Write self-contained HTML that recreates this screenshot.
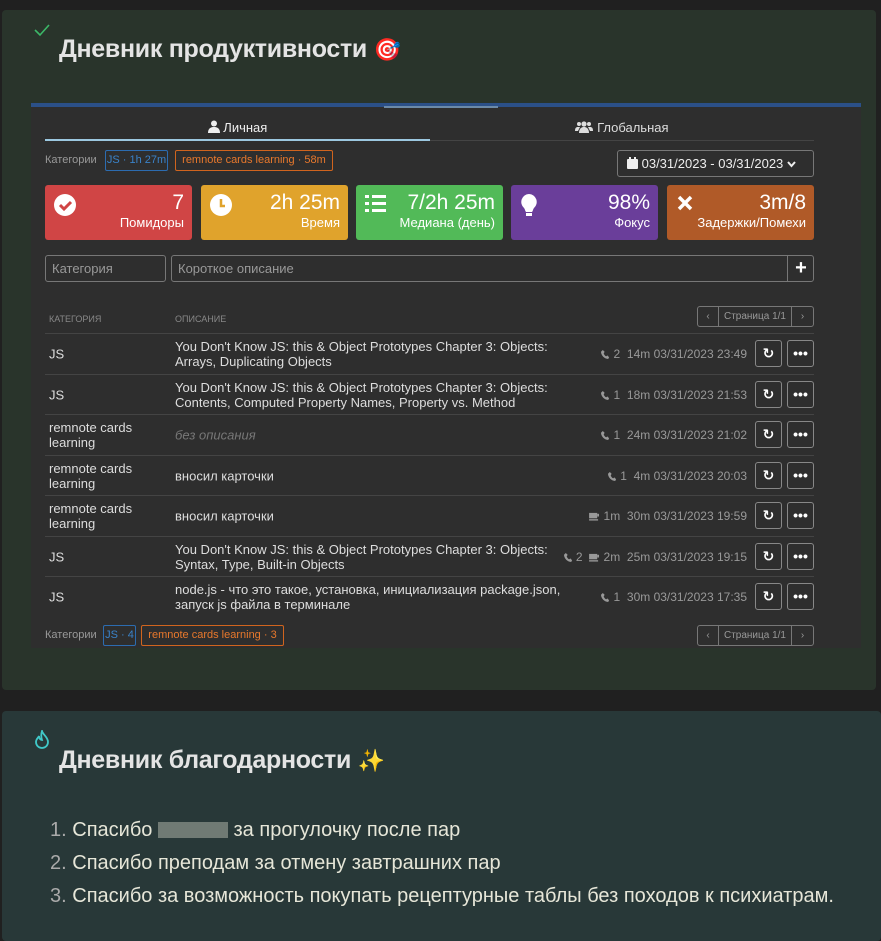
<!DOCTYPE html>
<html><head><meta charset="utf-8"><style>
*{box-sizing:border-box;margin:0;padding:0}
body{width:881px;height:929px;background:#202020;font-family:"Liberation Sans","DejaVu Sans",sans-serif;color:#ddd;position:relative;overflow:hidden}
.a{position:absolute}
.card1{left:2px;top:10px;width:874px;height:680px;background:#29342b;border-radius:4px}
.card2{left:2px;top:711px;width:879px;height:230px;background:#283838;border-radius:4px}
h1{position:absolute;font-size:25px;font-weight:bold;color:#e4e4e4;letter-spacing:-0.3px}
.w{left:31px;top:103px;width:830px;height:545px;background:#2e2e2e}
.tag{position:absolute;height:21px;border:1px solid;font-size:11px;line-height:19px;text-align:center;border-radius:2px;white-space:nowrap}
.stat{position:absolute;top:185px;height:55px;border-radius:3px;color:#fff;text-align:right;padding:6px 8px 0 0}
.stat b{display:block;font-weight:normal;font-size:21px;line-height:24px}
.stat span{font-size:13px;line-height:16px;display:block}
.stat svg{position:absolute;left:9px;top:9px}
.inp{position:absolute;top:255px;height:27px;border:1px solid #777;border-radius:3px;font-size:13px;color:#999;padding:5px 6px}
.row{position:absolute;left:45px;width:769px;height:40px;border-top:1px solid #444;font-size:13px;color:#ddd}
.row .c{position:absolute;left:4px;top:50%;transform:translateY(-50%);line-height:15px}
.row .d{position:absolute;left:130px;top:50%;transform:translateY(-50%);line-height:15px;width:392px}
.row .m{position:absolute;right:67px;top:50%;transform:translateY(-50%);font-size:12px;color:#999;white-space:nowrap}
.btn{position:absolute;top:6px;width:27px;height:27px;border:1px solid #888;border-radius:3px;color:#fff;text-align:center;font-weight:bold;line-height:25px;font-size:14px}
.pg{position:absolute;height:21px;border:1px solid #777;border-radius:3px;font-size:10px;color:#999;display:flex}
.pg div{border-right:1px solid #777;line-height:19px;text-align:center}
.pg div:last-child{border:0}
ol{position:absolute;left:50px;top:819px;font-size:20px;color:#e6e6d8;list-style:none}
ol li{height:33px;white-space:nowrap}
ol li span.n{color:#aaa}
.ph{display:inline-block;width:9px;height:9px;vertical-align:-1px}
</style></head><body>
<svg width="0" height="0" style="position:absolute"><defs><symbol id="p" viewBox="0 0 10 10"><path d="M2 0l2 2-1 2c1 2 2 3 3 3l1-1 2 2-1 2C4 10 0 6 0 2z" fill="#999"/></symbol><symbol id="k" viewBox="0 0 12 10"><rect x="0" y="1" width="9" height="6" fill="#999"/><rect x="9" y="2" width="2" height="3" fill="#999"/><rect x="0" y="8" width="10" height="1.5" fill="#999"/></symbol></defs></svg>
<div class="a card1"></div>
<svg class="a" style="left:33px;top:23px" width="18" height="14"><path d="M2 7l5 5L16 2" stroke="#3cb868" stroke-width="1.6" fill="none"/></svg>
<h1 style="left:59px;top:35px">Дневник продуктивности <span style="font-size:22px">🎯</span></h1>
<div class="a w"></div>
<div class="a" style="left:31px;top:103px;width:830px;height:4px;background:#2b5088"></div>
<div class="a" style="left:384px;top:106px;width:114px;height:2px;background:#6c8aa8"></div>
<div class="a" style="left:45px;top:120px;width:385px;text-align:center;font-size:13px;color:#eee">
<svg width="12" height="13" viewBox="0 0 12 13" style="vertical-align:-1px"><circle cx="6" cy="3.5" r="3" fill="#eee"/><path d="M0 13c0-4 2-6 6-6s6 2 6 6z" fill="#eee"/></svg> Личная</div>
<div class="a" style="left:45px;top:139px;width:385px;height:2px;background:#9cc8e0"></div>
<div class="a" style="left:430px;top:140px;width:384px;height:1px;background:#444"></div>
<div class="a" style="left:430px;top:120px;width:384px;text-align:center;font-size:13px;color:#ddd"><svg width="18" height="12" viewBox="0 0 18 12" style="vertical-align:-1px"><circle cx="4" cy="3" r="2" fill="#ddd"/><circle cx="14" cy="3" r="2" fill="#ddd"/><circle cx="9" cy="3" r="2.6" fill="#ddd"/><path d="M4 12c0-4 2-6 5-6s5 2 5 6z" fill="#ddd"/><path d="M0 10c0-3 1-4 3-4h2L3 10zM18 10c0-3-1-4-3-4h-2l2 4z" fill="#ddd"/></svg> Глобальная</div>
<div class="a" style="left:45px;top:154px;font-size:11px;color:#999">Категории</div>
<div class="tag" style="left:105px;top:150px;width:63px;border-color:#2c6cb0;color:#3a82c8">JS · 1h 27m</div>
<div class="tag" style="left:175px;top:150px;width:158px;border-color:#d0641e;color:#e8782c">remnote cards learning · 58m</div>
<div class="a" style="left:617px;top:150px;width:197px;height:27px;border:1px solid #777;border-radius:3px;font-size:13px;color:#eee;padding:5px 0 0 9px">
<svg width="11" height="12" style="vertical-align:-1px"><rect x="0" y="2" width="11" height="10" rx="1" fill="#eee"/><rect x="2" y="0" width="2" height="3" fill="#eee"/><rect x="7" y="0" width="2" height="3" fill="#eee"/></svg> 03/31/2023 - 03/31/2023 <svg width="9" height="7"><path d="M1 1l3.5 4L8 1" stroke="#eee" stroke-width="2" fill="none"/></svg></div>
<div class="stat" style="left:45px;width:147px;background:#d04545"><svg width="22" height="22"><circle cx="11" cy="11" r="11" fill="#fff"/><path d="M6 11l4 4 7-7" stroke="#d04545" stroke-width="3" fill="none"/></svg><b>7</b><span>Помидоры</span></div>
<div class="stat" style="left:201px;width:147px;background:#e0a32c"><svg width="22" height="22"><circle cx="11" cy="11" r="11" fill="#fff"/><path d="M11 5v7h4" stroke="#e0a32c" stroke-width="2.5" fill="none"/></svg><b>2h 25m</b><span>Время</span></div>
<div class="stat" style="left:356px;width:147px;background:#52ba58"><svg width="22" height="20"><g fill="#fff"><rect x="0" y="1" width="4" height="3"/><rect x="0" y="8" width="4" height="3"/><rect x="0" y="15" width="4" height="3"/><rect x="7" y="1" width="14" height="3"/><rect x="7" y="8" width="14" height="3"/><rect x="7" y="15" width="14" height="3"/></g></svg><b>7/2h 25m</b><span>Медиана (день)</span></div>
<div class="stat" style="left:511px;width:147px;background:#6a3e9a"><svg width="18" height="24"><path d="M9 0a8 8 0 0 0-5 14c1 1 1 3 2 4h6c1-1 1-3 2-4A8 8 0 0 0 9 0z" fill="#fff"/><rect x="6" y="19" width="6" height="3" fill="#fff"/></svg><b>98%</b><span>Фокус</span></div>
<div class="stat" style="left:667px;width:147px;background:#b05a28"><svg width="18" height="18"><path d="M3 3l12 12M15 3L3 15" stroke="#fff" stroke-width="3.5"/></svg><b>3m/8</b><span>Задержки/Помехи</span></div>
<div class="inp" style="left:45px;width:121px">Категория</div>
<div class="inp" style="left:171px;width:643px">Короткое описание</div>
<div class="a" style="left:787px;top:255px;width:27px;height:27px;border-left:1px solid #777;color:#fff;font-size:20px;font-weight:bold;text-align:center;line-height:26px">+</div>
<div class="a" style="left:49px;top:314px;font-size:9px;color:#888">КАТЕГОРИЯ</div>
<div class="a" style="left:175px;top:314px;font-size:9px;color:#888">ОПИСАНИЕ</div>
<div class="pg" style="left:697px;top:306px;width:117px"><div style="width:21px">‹</div><div style="flex:1">Страница 1/1</div><div style="width:21px">›</div></div>

<div class="row" style="top:333px"><div class="c">JS</div><div class="d">You Don't Know JS: this &amp; Object Prototypes Chapter 3: Objects: Arrays, Duplicating Objects</div><div class="m"><svg class="ph"><use href="#p"/></svg> 2 &nbsp;14m 03/31/2023 23:49</div><div class="btn" style="left:710px">↻</div><div class="btn" style="left:742px">•••</div></div>
<div class="row" style="top:374px"><div class="c">JS</div><div class="d">You Don't Know JS: this &amp; Object Prototypes Chapter 3: Objects: Contents, Computed Property Names, Property vs. Method</div><div class="m"><svg class="ph"><use href="#p"/></svg> 1 &nbsp;18m 03/31/2023 21:53</div><div class="btn" style="left:710px">↻</div><div class="btn" style="left:742px">•••</div></div>
<div class="row" style="top:414px"><div class="c">remnote cards<br>learning</div><div class="d" style="font-style:italic;color:#777">без описания</div><div class="m"><svg class="ph"><use href="#p"/></svg> 1 &nbsp;24m 03/31/2023 21:02</div><div class="btn" style="left:710px">↻</div><div class="btn" style="left:742px">•••</div></div>
<div class="row" style="top:455px"><div class="c">remnote cards<br>learning</div><div class="d">вносил карточки</div><div class="m"><svg class="ph"><use href="#p"/></svg> 1 &nbsp;4m 03/31/2023 20:03</div><div class="btn" style="left:710px">↻</div><div class="btn" style="left:742px">•••</div></div>
<div class="row" style="top:495px"><div class="c">remnote cards<br>learning</div><div class="d">вносил карточки</div><div class="m"><svg class="ph" style="width:11px"><use href="#k"/></svg> 1m &nbsp;30m 03/31/2023 19:59</div><div class="btn" style="left:710px">↻</div><div class="btn" style="left:742px">•••</div></div>
<div class="row" style="top:536px"><div class="c">JS</div><div class="d">You Don't Know JS: this &amp; Object Prototypes Chapter 3: Objects: Syntax, Type, Built-in Objects</div><div class="m"><svg class="ph"><use href="#p"/></svg> 2 &nbsp;<svg class="ph" style="width:11px"><use href="#k"/></svg> 2m &nbsp;25m 03/31/2023 19:15</div><div class="btn" style="left:710px">↻</div><div class="btn" style="left:742px">•••</div></div>
<div class="row" style="top:576px"><div class="c">JS</div><div class="d">node.js - что это такое, установка, инициализация package.json, запуск js файла в терминале</div><div class="m"><svg class="ph"><use href="#p"/></svg> 1 &nbsp;30m 03/31/2023 17:35</div><div class="btn" style="left:710px">↻</div><div class="btn" style="left:742px">•••</div></div>

<div class="a" style="left:45px;top:629px;font-size:11px;color:#999">Категории</div>
<div class="tag" style="left:103px;top:625px;width:33px;border-color:#2c6cb0;color:#3a82c8">JS · 4</div>
<div class="tag" style="left:141px;top:625px;width:143px;border-color:#d0641e;color:#e8782c">remnote cards learning · 3</div>
<div class="pg" style="left:697px;top:625px;width:117px"><div style="width:21px">‹</div><div style="flex:1">Страница 1/1</div><div style="width:21px">›</div></div>

<div class="a card2"></div>
<svg class="a" style="left:34px;top:730px" width="18" height="20"><path d="M8 1c1 4 6 6 6 11a6 6 0 0 1-12 0c0-3 2-4 3-6 0 3 2 4 3 4-1-3-1-6 0-9z" stroke="#40c8c8" stroke-width="1.8" fill="none"/></svg>
<h1 style="left:59px;top:746px">Дневник благодарности <span style="font-size:22px;color:#ffe030">✨</span></h1>
<ol>
<li><span class="n">1.</span> Спасибо <span style="display:inline-block;width:70px;height:16px;background:#707a74;vertical-align:-2px"></span> за прогулочку после пар</li>
<li><span class="n">2.</span> Спасибо преподам за отмену завтрашних пар</li>
<li><span class="n">3.</span> Спасибо за возможность покупать рецептурные таблы без походов к психиатрам.</li>
</ol>
</body></html>
